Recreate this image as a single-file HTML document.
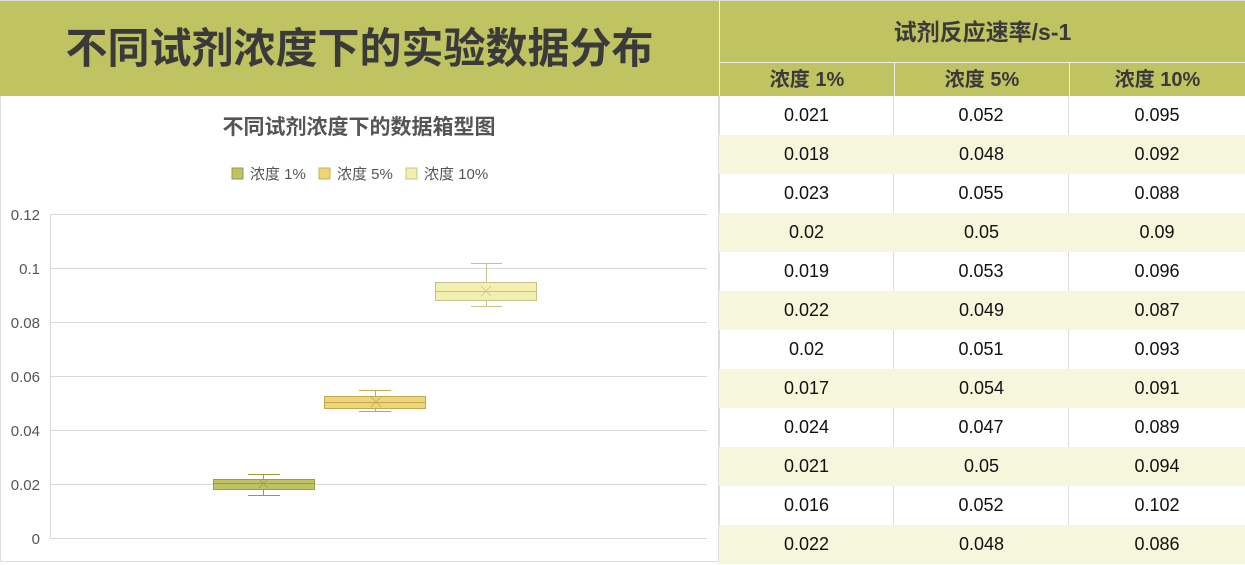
<!DOCTYPE html>
<html><head><meta charset="utf-8"><style>
*{margin:0;padding:0;box-sizing:border-box}
body{width:1245px;height:565px;background:#fff;position:relative;overflow:hidden;font-family:"Liberation Sans","Noto Sans CJK SC",sans-serif;color:#111}
.a{position:absolute}
.title{left:0;top:0;width:719px;height:96px;background:#bfc362;border-top:1px solid #ddd;font-size:42px;font-weight:bold;color:#3a3a3a;text-align:center;line-height:96px;letter-spacing:0px}
.h1{left:719px;top:0;width:526px;height:62px;background:#bfc362;border-left:1px solid #eee;border-top:1px solid #ddd;font-size:23px;font-weight:bold;color:#3a3a3a;text-align:center;line-height:62px}
.h2{top:62px;height:34px;background:#bfc362;border-left:1px solid #eee;border-top:1px solid #eee;font-size:20px;font-weight:bold;color:#3a3a3a;text-align:center;line-height:34px}
.c{height:39px;font-size:18px;text-align:center;line-height:39px;color:#111}
.chart{left:0;top:96px;width:719px;height:466px;border:1px solid #ddd;border-top:none}
</style></head><body>
<div class="a title">不同试剂浓度下的实验数据分布</div>
<div class="a h1">试剂反应速率/s-1</div>
<div class="a h2" style="left:719px;width:175px">浓度 1%</div>
<div class="a h2" style="left:894px;width:175px">浓度 5%</div>
<div class="a h2" style="left:1069px;width:176px">浓度 10%</div>
<div class="a chart"></div>
<svg class="a" style="left:0;top:96px" width="719" height="469">
<text x="359" y="38" text-anchor="middle" font-size="21" font-weight="bold" fill="#555" font-family="Liberation Sans,Noto Sans CJK SC,sans-serif">不同试剂浓度下的数据箱型图</text>
<g font-size="15" fill="#555" font-family="Liberation Sans,Noto Sans CJK SC,sans-serif">
<rect x="232" y="72" width="11" height="11" fill="#bfc362" stroke="#9a9a48"/><text x="250" y="83">浓度 1%</text>
<rect x="319" y="72" width="11" height="11" fill="#efd577" stroke="#c8b055"/><text x="337" y="83">浓度 5%</text>
<rect x="406" y="72" width="11" height="11" fill="#f2efb0" stroke="#c9c287"/><text x="424" y="83">浓度 10%</text>
</g>
<g stroke="#d9d9d9" stroke-width="1">
<line x1="50" y1="118.5" x2="707" y2="118.5"/><line x1="50" y1="172.5" x2="707" y2="172.5"/><line x1="50" y1="226.5" x2="707" y2="226.5"/><line x1="50" y1="280.5" x2="707" y2="280.5"/><line x1="50" y1="334.5" x2="707" y2="334.5"/><line x1="50" y1="388.5" x2="707" y2="388.5"/><line x1="50" y1="442.5" x2="707" y2="442.5"/><line x1="50.5" y1="118" x2="50.5" y2="443"/>
</g>
<g font-size="15" fill="#555" text-anchor="end" font-family="Liberation Sans,sans-serif">
<text x="40" y="124">0.12</text><text x="40" y="178">0.1</text><text x="40" y="232">0.08</text><text x="40" y="286">0.06</text><text x="40" y="340">0.04</text><text x="40" y="394">0.02</text><text x="40" y="448">0</text>
</g>
<g stroke="#9a9a48" fill="none"><line x1="263.5" y1="378" x2="263.5" y2="399"/><line x1="248" y1="378.5" x2="280" y2="378.5"/><line x1="248" y1="399.5" x2="280" y2="399.5"/><rect x="213.5" y="383.5" width="101" height="10" fill="#bfc362"/><line x1="213" y1="387.5" x2="315" y2="387.5"/><path d="M259 383l9 9M268 383l-9 9" stroke-width=".8"/></g>
<g stroke="#c0aa50" fill="none"><line x1="375.5" y1="294" x2="375.5" y2="315"/><line x1="359" y1="294.5" x2="391" y2="294.5"/><line x1="359" y1="315.5" x2="391" y2="315.5"/><rect x="324.5" y="300.5" width="101" height="12" fill="#efd577"/><line x1="324" y1="306.5" x2="426" y2="306.5"/><path d="M371 301l10 10M381 301l-10 10" stroke-width=".8"/></g>
<g stroke="#c9c287" fill="none"><line x1="486.5" y1="167" x2="486.5" y2="210"/><line x1="471" y1="167.5" x2="502" y2="167.5"/><line x1="471" y1="210.5" x2="502" y2="210.5"/><rect x="435.5" y="186.5" width="101" height="18" fill="#f2efb0"/><line x1="435" y1="195.5" x2="537" y2="195.5"/><path d="M481 190l10 10M491 190l-10 10" stroke-width=".8"/></g>
</svg>
<div class="a" style="left:719px;top:96px;width:526px" >
<div style="display:grid;grid-template-columns:175px 175px 176px">
<div class="c" style="border-left:1px solid #ddd;border-right:1px solid #ddd">0.021</div><div class="c" style="border-right:1px solid #ddd">0.052</div><div class="c">0.095</div>
<div class="c" style="background:#f6f6dc">0.018</div><div class="c" style="background:#f6f6dc">0.048</div><div class="c" style="background:#f6f6dc">0.092</div>
<div class="c" style="border-left:1px solid #ddd;border-right:1px solid #ddd">0.023</div><div class="c" style="border-right:1px solid #ddd">0.055</div><div class="c">0.088</div>
<div class="c" style="background:#f6f6dc">0.02</div><div class="c" style="background:#f6f6dc">0.05</div><div class="c" style="background:#f6f6dc">0.09</div>
<div class="c" style="border-left:1px solid #ddd;border-right:1px solid #ddd">0.019</div><div class="c" style="border-right:1px solid #ddd">0.053</div><div class="c">0.096</div>
<div class="c" style="background:#f6f6dc">0.022</div><div class="c" style="background:#f6f6dc">0.049</div><div class="c" style="background:#f6f6dc">0.087</div>
<div class="c" style="border-left:1px solid #ddd;border-right:1px solid #ddd">0.02</div><div class="c" style="border-right:1px solid #ddd">0.051</div><div class="c">0.093</div>
<div class="c" style="background:#f6f6dc">0.017</div><div class="c" style="background:#f6f6dc">0.054</div><div class="c" style="background:#f6f6dc">0.091</div>
<div class="c" style="border-left:1px solid #ddd;border-right:1px solid #ddd">0.024</div><div class="c" style="border-right:1px solid #ddd">0.047</div><div class="c">0.089</div>
<div class="c" style="background:#f6f6dc">0.021</div><div class="c" style="background:#f6f6dc">0.05</div><div class="c" style="background:#f6f6dc">0.094</div>
<div class="c" style="border-left:1px solid #ddd;border-right:1px solid #ddd">0.016</div><div class="c" style="border-right:1px solid #ddd">0.052</div><div class="c">0.102</div>
<div class="c" style="background:#f6f6dc">0.022</div><div class="c" style="background:#f6f6dc">0.048</div><div class="c" style="background:#f6f6dc">0.086</div>
</div></div>
</body></html>
